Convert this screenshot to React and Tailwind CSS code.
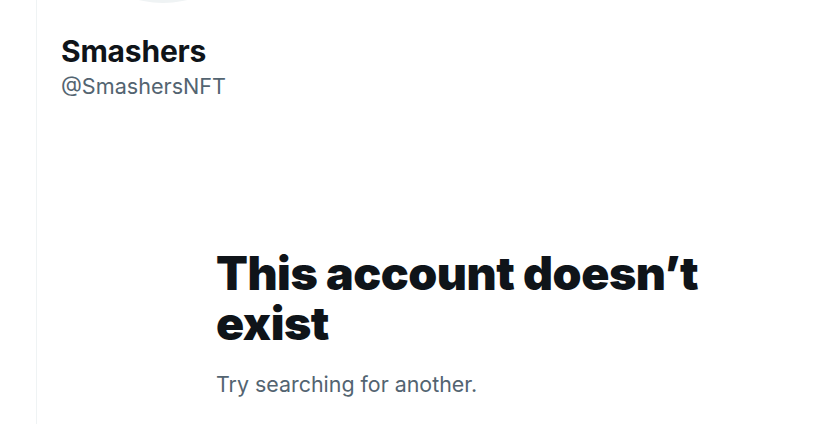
const font = { fontFamily: "Inter, 'Noto Sans', sans-serif" };

export default function App() {
  return (
    <div className="flex h-[424px] w-[814px] overflow-hidden bg-white" style={font}>
      <div className="w-[36px] shrink-0" />
      <main className="flex flex-1 flex-col border-l border-[#eff3f4]">
        {/* avatar, mostly scrolled out of view */}
        <div className="ml-[26px] -mt-[197px] h-[200px] w-[200px] rounded-full bg-[#eff3f4]" />

        <div className="mt-[30px] pl-[24px]">
          <h2 className="text-[30px] font-bold leading-[36px] tracking-[-0.2px] text-[#0f1419]">
            Smashers
          </h2>
          <p className="mt-[2px] text-[21.6px] leading-[30px] text-[#536471]">@SmashersNFT</p>
        </div>

        <section className="mt-[147px] pl-[179px]">
          <h1 className="w-[500px] text-[46.5px] font-black leading-[50px] tracking-[-0.5px] text-[#0f1419]">
            This account doesn’t exist
          </h1>
          <p className="mt-[21px] text-[21.4px] leading-[30px] text-[#536471]">
            Try searching for another.
          </p>
        </section>
      </main>
    </div>
  );
}
